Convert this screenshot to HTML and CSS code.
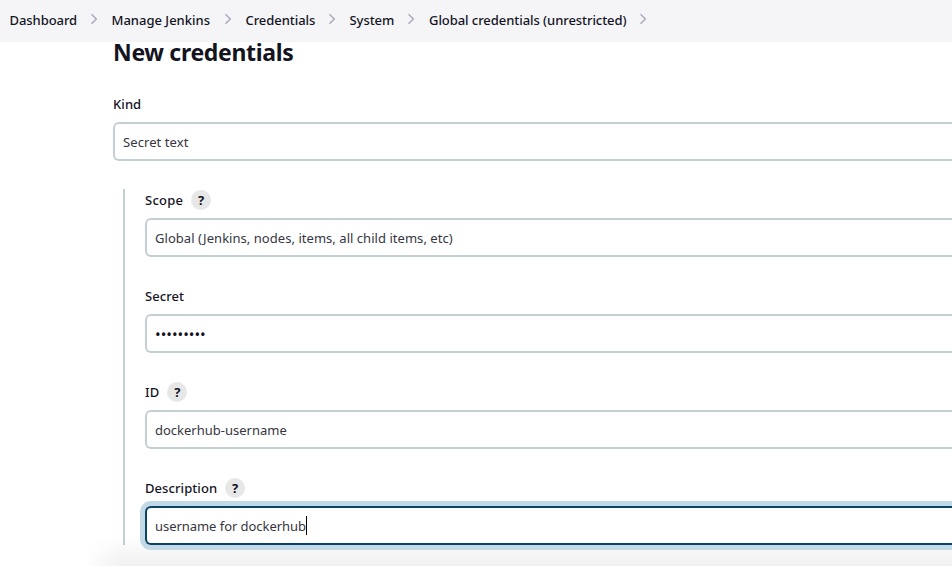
FILE: index.html
```html
<!DOCTYPE html>
<html lang="en">
<head>
<meta charset="utf-8">
<title>New credentials [Jenkins]</title>
<link rel="stylesheet" href="styles.css">
</head>
<body>
<nav class="breadcrumbs">
  <span class="crumb crumb-dashboard">Dashboard</span><svg class="chevron" viewBox="0 0 8 12"><path d="M1.5 1.2 6.3 6 1.5 10.8"/></svg>
  <span class="crumb crumb-manage">Manage Jenkins</span><svg class="chevron" viewBox="0 0 8 12"><path d="M1.5 1.2 6.3 6 1.5 10.8"/></svg>
  <span class="crumb crumb-credentials">Credentials</span><svg class="chevron" viewBox="0 0 8 12"><path d="M1.5 1.2 6.3 6 1.5 10.8"/></svg>
  <span class="crumb crumb-system">System</span><svg class="chevron" viewBox="0 0 8 12"><path d="M1.5 1.2 6.3 6 1.5 10.8"/></svg>
  <span class="crumb crumb-global">Global credentials (unrestricted)</span><svg class="chevron" viewBox="0 0 8 12"><path d="M1.5 1.2 6.3 6 1.5 10.8"/></svg>
</nav>
<main class="content">
  <h1 class="title">New credentials</h1>
  <div class="field kind">
    <div class="label"><span>Kind</span></div>
    <div class="input"><span class="kind-value">Secret text</span></div>
  </div>
  <div class="group">
    <div class="field">
      <div class="label"><span class="scope-label">Scope</span><span class="help">?</span></div>
      <div class="input"><span class="scope-value">Global (Jenkins, nodes, items, all child items, etc)</span></div>
    </div>
    <div class="field">
      <div class="label"><span>Secret</span></div>
      <div class="input"><span class="password">•••••••••</span></div>
    </div>
    <div class="field">
      <div class="label"><span>ID</span><span class="help">?</span></div>
      <div class="input"><span class="id-value">dockerhub-username</span></div>
    </div>
    <div class="field">
      <div class="label"><span>Description</span><span class="help">?</span></div>
      <div class="input focused"><span class="desc-value">username for dockerhub</span><i class="caret"></i></div>
    </div>
  </div>
</main>
<div class="bottom-shade"></div>
</body>
</html>
```

FILE: styles.css
```css
* { box-sizing: border-box; }
html, body { height: 100%; }
body {
  margin: 0;
  overflow: hidden;
  background: #fff;
  color: #14141f;
  font: 13px/20px "Noto Sans", sans-serif;
}
.breadcrumbs {
  display: flex;
  align-items: center;
  height: 42px;
  padding: 0 0 2px 9.5px;
  background: #f5f5f8;
  font-size: 13px;
  font-weight: 480;
  letter-spacing: -0.06px;
  white-space: nowrap;
}
.crumb { flex: none; }
.crumb-dashboard { width: 67px; }
.crumb-manage { width: 99px; letter-spacing: 0; }
.crumb-credentials { width: 69px; }
.crumb-system { width: 44.5px; }
.crumb-global { width: 197px; }
.chevron {
  flex: none;
  width: 8px;
  height: 12px;
  margin: 0 14px 2px 13px;
  fill: none;
  stroke: #aaaabe;
  stroke-width: 1.5;
}
.content { padding-left: 113px; }
.title {
  margin: 0;
  height: 52px;
  font-size: 23px;
  line-height: 20px;
  font-weight: 700;
  letter-spacing: -0.32px;
}
.field { height: 96px; }
.label {
  display: flex;
  align-items: center;
  gap: 8px;
  height: 20px;
  margin-bottom: 8px;
  font-size: 13px;
  font-weight: 500;
  letter-spacing: 0.08px;
}
.scope-label { letter-spacing: 0.25px; }
.help {
  width: 20px;
  height: 20px;
  border-radius: 50%;
  background: #e7e7e7;
  text-align: center;
  font-weight: 700;
}
.input {
  display: flex;
  align-items: center;
  height: 39px;
  padding-left: 8px;
  border: 2px solid #c3cfd2;
  border-right: 0;
  border-radius: 6px 0 0 6px;
  background: #fff;
  font-size: 13px;
  color: #363642;
  white-space: nowrap;
}
.scope-value { letter-spacing: 0.04px; }
.kind-value { letter-spacing: 0.08px; }
.desc-value { letter-spacing: -0.05px; }
.group {
  height: 356px;
  margin: -1px 0 0 10px;
  padding: 1px 0 0 20px;
  border-left: 2px solid #c3cfd2;
}
.focused {
  position: relative;
  z-index: 2;
  border-color: #0b4365;
  box-shadow: 0 0 0 5px #c2d9e7;
}
.caret { width: 1px; height: 19px; background: #000; }
.password { font-size: 15px; letter-spacing: 0px; color: #14141f; }
.bottom-shade {
  position: absolute;
  z-index: 1;
  left: 85px;
  right: 0;
  bottom: 5px;
  height: 31px;
  background: linear-gradient(to bottom, transparent, rgba(0, 0, 0, .055));
  -webkit-mask-image: linear-gradient(to right, transparent, #000 35px);
  mask-image: linear-gradient(to right, transparent, #000 35px);
}
```
